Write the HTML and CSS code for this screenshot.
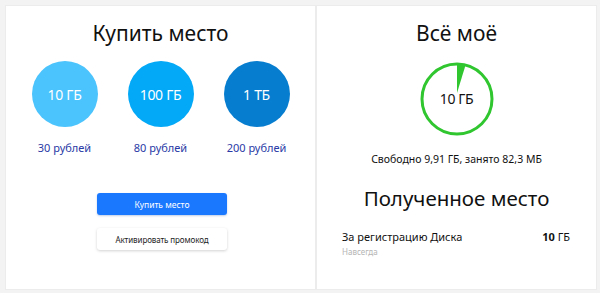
FILE: index.html
```html
<!DOCTYPE html>
<html lang="ru">
<head>
<meta charset="utf-8">
<link rel="stylesheet" href="styles.css">
</head>
<body>
<div class="page">
  <section class="card card-buy">
    <h2 class="title">Купить место</h2>
    <div class="plans">
      <div class="plan">
        <div class="bubble bubble-s">10 ГБ</div>
        <a class="price">30 рублей</a>
      </div>
      <div class="plan">
        <div class="bubble bubble-m">100 ГБ</div>
        <a class="price">80 рублей</a>
      </div>
      <div class="plan">
        <div class="bubble bubble-l">1 ТБ</div>
        <a class="price">200 рублей</a>
      </div>
    </div>
    <div class="actions">
      <button class="btn btn-primary">Купить место</button>
      <button class="btn btn-secondary">Активировать промокод</button>
    </div>
  </section>
  <section class="card card-mine">
    <h2 class="title">Всё моё</h2>
    <div class="usage">
      <svg class="ring" width="74" height="74" viewBox="0 0 74 74">
        <circle cx="37" cy="37" r="35" fill="none" stroke="#2fc62f" stroke-width="3"/>
        <polygon points="37,2 45.5,3.2 37,31" fill="#2fc62f"/>
      </svg>
      <span class="ring-label">10 ГБ</span>
    </div>
    <p class="summary">Свободно 9,91 ГБ, занято 82,3 МБ</p>
    <h2 class="title title-received">Полученное место</h2>
    <div class="grant">
      <div class="grant-info">
        <div class="grant-name">За регистрацию Диска</div>
        <div class="grant-term">Навсегда</div>
      </div>
      <div class="grant-size"><b>10</b> ГБ</div>
    </div>
  </section>
</div>
</body>
</html>
```
FILE: styles.css
```css
* { box-sizing: border-box; }
html, body {
  margin: 0;
  padding: 0;
  background: #f3f3f3;
  font-family: "Noto Sans", "Open Sans", sans-serif;
  color: #111;
}
.page {
  display: flex;
  gap: 2px;
  padding: 6px 4px 4px 6px;
  height: 293px;
}
.card {
  background: #fff;
  height: 283px;
  box-shadow: 0 0 0 1px #ececec;
}
.card-buy { width: 309px; }
.card-mine { width: 279px; }
.title {
  margin: 0;
  font-weight: 400;
  font-size: 21px;
  line-height: 26px;
  text-align: center;
  padding-top: 14px;
  color: #111;
}
.plans {
  display: flex;
  justify-content: center;
  gap: 30px;
  margin-top: 15px;
}
.plan {
  display: flex;
  flex-direction: column;
  align-items: center;
  width: 66px;
}
.bubble {
  width: 66px;
  height: 66px;
  border-radius: 50%;
  display: flex;
  align-items: center;
  justify-content: center;
  color: #fff;
  font-size: 14px;
  letter-spacing: -0.3px;
}
.bubble-s { background: #4bc3fc; }
.bubble-m { background: #03a8f6; }
.bubble-l { background: #077dcf; }
.price {
  margin-top: 14px;
  font-size: 11px;
  line-height: 14px;
  color: #2a3aa6;
  white-space: nowrap;
}
.actions {
  display: flex;
  flex-direction: column;
  align-items: center;
  gap: 13px;
  margin-top: 38px;
  padding-left: 3px;
}
.btn {
  width: 130px;
  height: 22px;
  border: 0;
  border-radius: 3px;
  font-family: inherit;
  font-size: 8.5px;
  padding: 0;
}
.btn-primary {
  background: #1a78ff;
  color: #fff;
  box-shadow: 0 1px 2px rgba(0, 60, 160, 0.25);
}
.btn-secondary {
  background: #fff;
  color: #222;
  font-size: 8px;
  letter-spacing: -0.1px;
  box-shadow: 0 1px 3px rgba(0, 0, 0, 0.18);
}
.usage {
  position: relative;
  width: 74px;
  height: 74px;
  margin: 16px auto 0;
}
.ring { display: block; }
.ring-label {
  position: absolute;
  inset: 0;
  display: flex;
  align-items: center;
  justify-content: center;
  font-size: 14px;
  color: #111;
  letter-spacing: -0.4px;
  padding-bottom: 1px;
}
.summary {
  margin: 16px 0 0;
  text-align: center;
  font-size: 10.5px;
  line-height: 14px;
  color: #111;
}
.title-received {
  padding-top: 19px;
  font-size: 20.5px;
}
.grant {
  display: flex;
  justify-content: space-between;
  padding: 19px 26px 0 25px;
}
.grant-name {
  font-size: 11px;
  line-height: 14px;
}
.grant-term {
  font-size: 8px;
  line-height: 16px;
  color: #b5b5b5;
}
.grant-size {
  font-size: 11px;
  line-height: 14px;
}
```
